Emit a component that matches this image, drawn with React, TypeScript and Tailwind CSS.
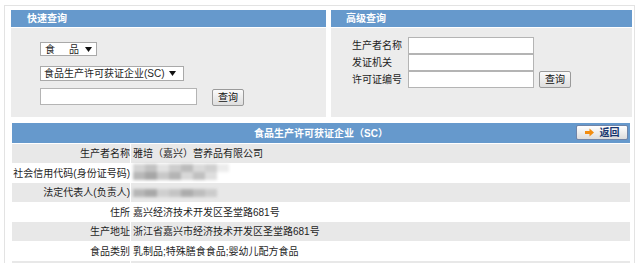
import React from 'react';

const blue = 'bg-[#6699cc]';

const Caret = () => (
    <svg width="7" height="5" viewBox="0 0 7 5" className="shrink-0">
        <path d="M0 0H7L3.5 5Z" fill="#111" />
    </svg>
);

const QueryButton: React.FC = () => (
    <button className="w-[32px] h-[17px] border border-[#9a9a9a] rounded-[2px] bg-gradient-to-b from-[#fbfbfb] to-[#dedede] text-[10px] text-[#111] leading-none flex items-center justify-center">
        查询
    </button>
);

// blurred personal data, drawn as a soft block mosaic
const Mosaic: React.FC<{ cells: string[][] }> = ({ cells }) => (
    <div className="flex flex-col blur-[1.5px]">
        {cells.map((line, j) => (
            <div key={j} className="flex h-[8px]">
                {line.map((c, i) => (
                    <div key={i} className={`w-[12px] h-full ${c}`} />
                ))}
            </div>
        ))}
    </div>
);

const rows = [
    { label: '生产者名称', value: '雅培（嘉兴）营养品有限公司' },
    {
        label: '社会信用代码(身份证号码)',
        mosaic: [
            ['bg-[#d4d4d4]', 'bg-[#c2c2c2]', 'bg-[#e2e2e2]', 'bg-[#cdcdcd]', 'bg-[#bcbcbc]', 'bg-[#dadada]', 'bg-[#d0d0d0]', 'bg-[#ececec]'],
            ['bg-[#b8b8b8]', 'bg-[#a6a6a6]', 'bg-[#c8c8c8]', 'bg-[#b4b4b4]', 'bg-[#d8d8d8]', 'bg-[#c0c0c0]', 'bg-[#dedede]', 'bg-white'],
        ],
    },
    {
        label: '法定代表人(负责人)',
        mosaic: [
            ['bg-[#b6b6b6]', 'bg-[#a8a8a8]', 'bg-[#cfcfcf]', 'bg-[#c4c4c4]', 'bg-[#acacac]', 'bg-[#bdbdbd]', 'bg-[#cbcbcb]'],
        ],
    },
    { label: '住所', value: '嘉兴经济技术开发区圣堂路681号' },
    { label: '生产地址', value: '浙江省嘉兴市经济技术开发区圣堂路681号' },
    { label: '食品类别', value: '乳制品;特殊膳食食品;婴幼儿配方食品' },
    { label: '', value: '' },
];

export default function App() {
    return (
        <div className="w-[641px] h-[263px] overflow-hidden bg-white pl-[4px] pt-[5px] text-[10px] text-[#1e1e1e] font-['Liberation_Sans','Noto_Sans_CJK_SC',sans-serif]">
            <div className="w-[631px] h-[300px] border border-[#e3e3e3] pl-[6px] pt-[4px]">
                {/* search panels */}
                <div className="flex gap-[5px]">
                    <div className="w-[315px]">
                        <div className={`h-[17px] ${blue} text-white font-bold pl-[16px] flex items-center`}>快速查询</div>
                        <div className="mt-px h-[89px] bg-[#ececec] pl-[29px] pt-[14px] flex flex-col">
                            <div className="w-[57px] h-[14px] bg-white border border-[#a9a9a9] flex items-center justify-between pl-[4px] pr-[4px]">
                                <span>食&nbsp;&nbsp;&nbsp;&nbsp;&nbsp;品</span>
                                <Caret />
                            </div>
                            <div className="mt-[10px] w-[144px] h-[15px] bg-white border border-[#a9a9a9] flex items-center justify-between pl-[3px] pr-[7px]">
                                <span>食品生产许可获证企业(SC)</span>
                                <Caret />
                            </div>
                            <div className="mt-[7px] flex items-start gap-[15px]">
                                <div className="w-[157px] h-[17px] bg-white border border-[#b4b4b4]" />
                                <div className="mt-px"><QueryButton /></div>
                            </div>
                        </div>
                    </div>
                    <div className="w-[301px]">
                        <div className={`h-[17px] ${blue} text-white font-bold pl-[15px] flex items-center`}>高级查询</div>
                        <div className="mt-px h-[89px] bg-[#ececec] pl-[21px] pt-[9px]">
                            <div className="flex items-end">
                                <div className="flex flex-col">
                                    {['生产者名称', '发证机关', '许可证编号'].map((l) => (
                                        <div key={l} className="flex items-center h-[17px]">
                                            <span className="w-[56px]">{l}</span>
                                            <div className="w-[126px] h-[17px] bg-white border border-[#b4b4b4]" />
                                        </div>
                                    ))}
                                </div>
                                <div className="ml-[5px]"><QueryButton /></div>
                            </div>
                        </div>
                    </div>
                </div>

                {/* result table */}
                <div className="mt-[6px] ml-px w-[618px]">
                    <div className={`relative h-[20px] ${blue} text-white font-bold flex items-center justify-center`}>
                        食品生产许可获证企业（SC）
                        <button className="absolute right-[2px] top-[2px] w-[52px] h-[15px] border border-[#6f84a8] rounded-[2px] bg-gradient-to-b from-white to-[#dcdcdc] flex items-center justify-center gap-[6px] text-[#17356e] font-bold leading-none">
                            <svg width="9" height="9" viewBox="0 0 9 9">
                                <path d="M0 3H4.5V0.5L9 4.5L4.5 8.5V6H0Z" fill="#f28c0f" />
                            </svg>
                            返回
                        </button>
                    </div>
                    <div className="mt-px flex flex-col">
                        {rows.map((r, i) => {
                            const shade = i % 2 === 0 ? 'bg-[#e8e8e8]' : 'bg-white';
                            const h = i % 2 === 0 ? 'h-[19px]' : 'h-[20px]';
                            return (
                                <div key={i} className={`flex gap-px bg-white ${h}`}>
                                    <div className={`w-[118px] ${shade} flex items-center justify-end whitespace-nowrap`}>{r.label}</div>
                                    <div className={`relative z-10 flex-1 ${shade} flex ${r.mosaic && i === 1 ? 'items-start pt-[1px]' : 'items-center'} pl-[2px] whitespace-nowrap`}>
                                        {r.mosaic ? <Mosaic cells={r.mosaic} /> : r.value}
                                    </div>
                                </div>
                            );
                        })}
                    </div>
                </div>
            </div>
        </div>
    );
}
